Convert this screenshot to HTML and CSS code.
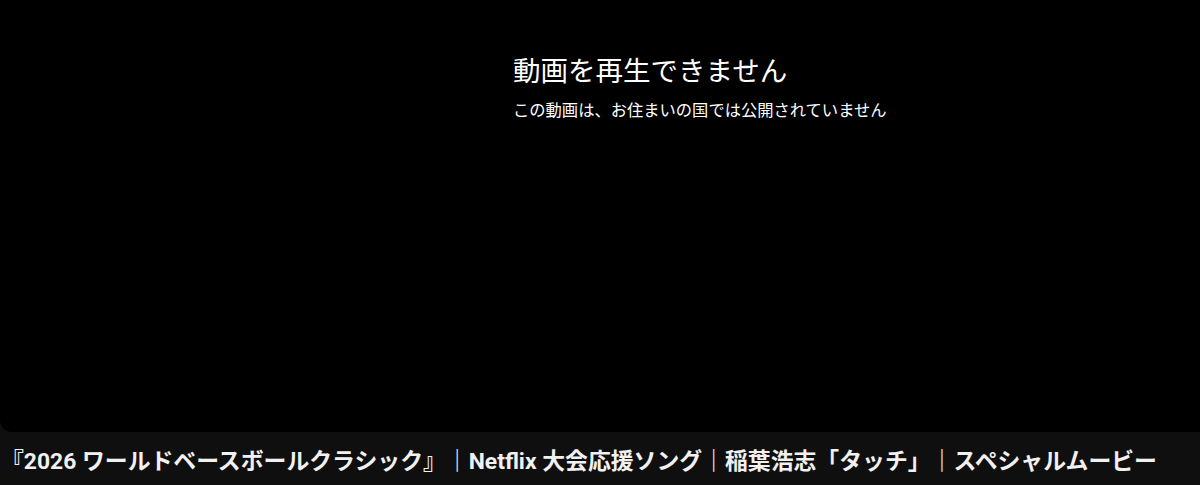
FILE: index.html
```html
<!DOCTYPE html>
<html lang="ja">
<head>
<meta charset="utf-8">
<link rel="stylesheet" href="styles.css">
</head>
<body>
<div class="page">
  <div class="player">
    <div class="error">
      <div class="error-title">動画を再生できません</div>
      <div class="error-sub">この動画は、お住まいの国では公開されていません</div>
    </div>
  </div>
  <h1 class="video-title">『2026 ワールドベースボールクラシック』｜Netflix 大会応援ソング｜稲葉浩志「タッチ」｜スペシャルムービー</h1>
</div>
</body>
</html>
```
FILE: styles.css
```css
html, body {
  margin: 0;
  padding: 0;
  background: #0f0f0f;
}
.page {
  width: 1200px;
  height: 485px;
  overflow: hidden;
}
.player {
  height: 432px;
  background: #000;
  border-bottom-left-radius: 12px;
  box-sizing: border-box;
  padding: 54px 0 0 513px;
}
.error {
  display: flex;
  flex-direction: column;
  gap: 9px;
  color: #fff;
  font-family: Roboto, "Noto Sans CJK JP", sans-serif;
}
.error-title {
  font-size: 27.5px;
  line-height: 36px;
  font-weight: 400;
}
.error-sub {
  font-size: 16.3px;
  line-height: 24px;
}
.video-title {
  margin: 0;
  padding: 14px 0 0 1px;
  color: #f1f1f1;
  font-family: Roboto, "Noto Sans CJK JP", sans-serif;
  font-weight: 700;
  font-size: 22.85px;
  line-height: 32px;
  white-space: nowrap;
}
```
